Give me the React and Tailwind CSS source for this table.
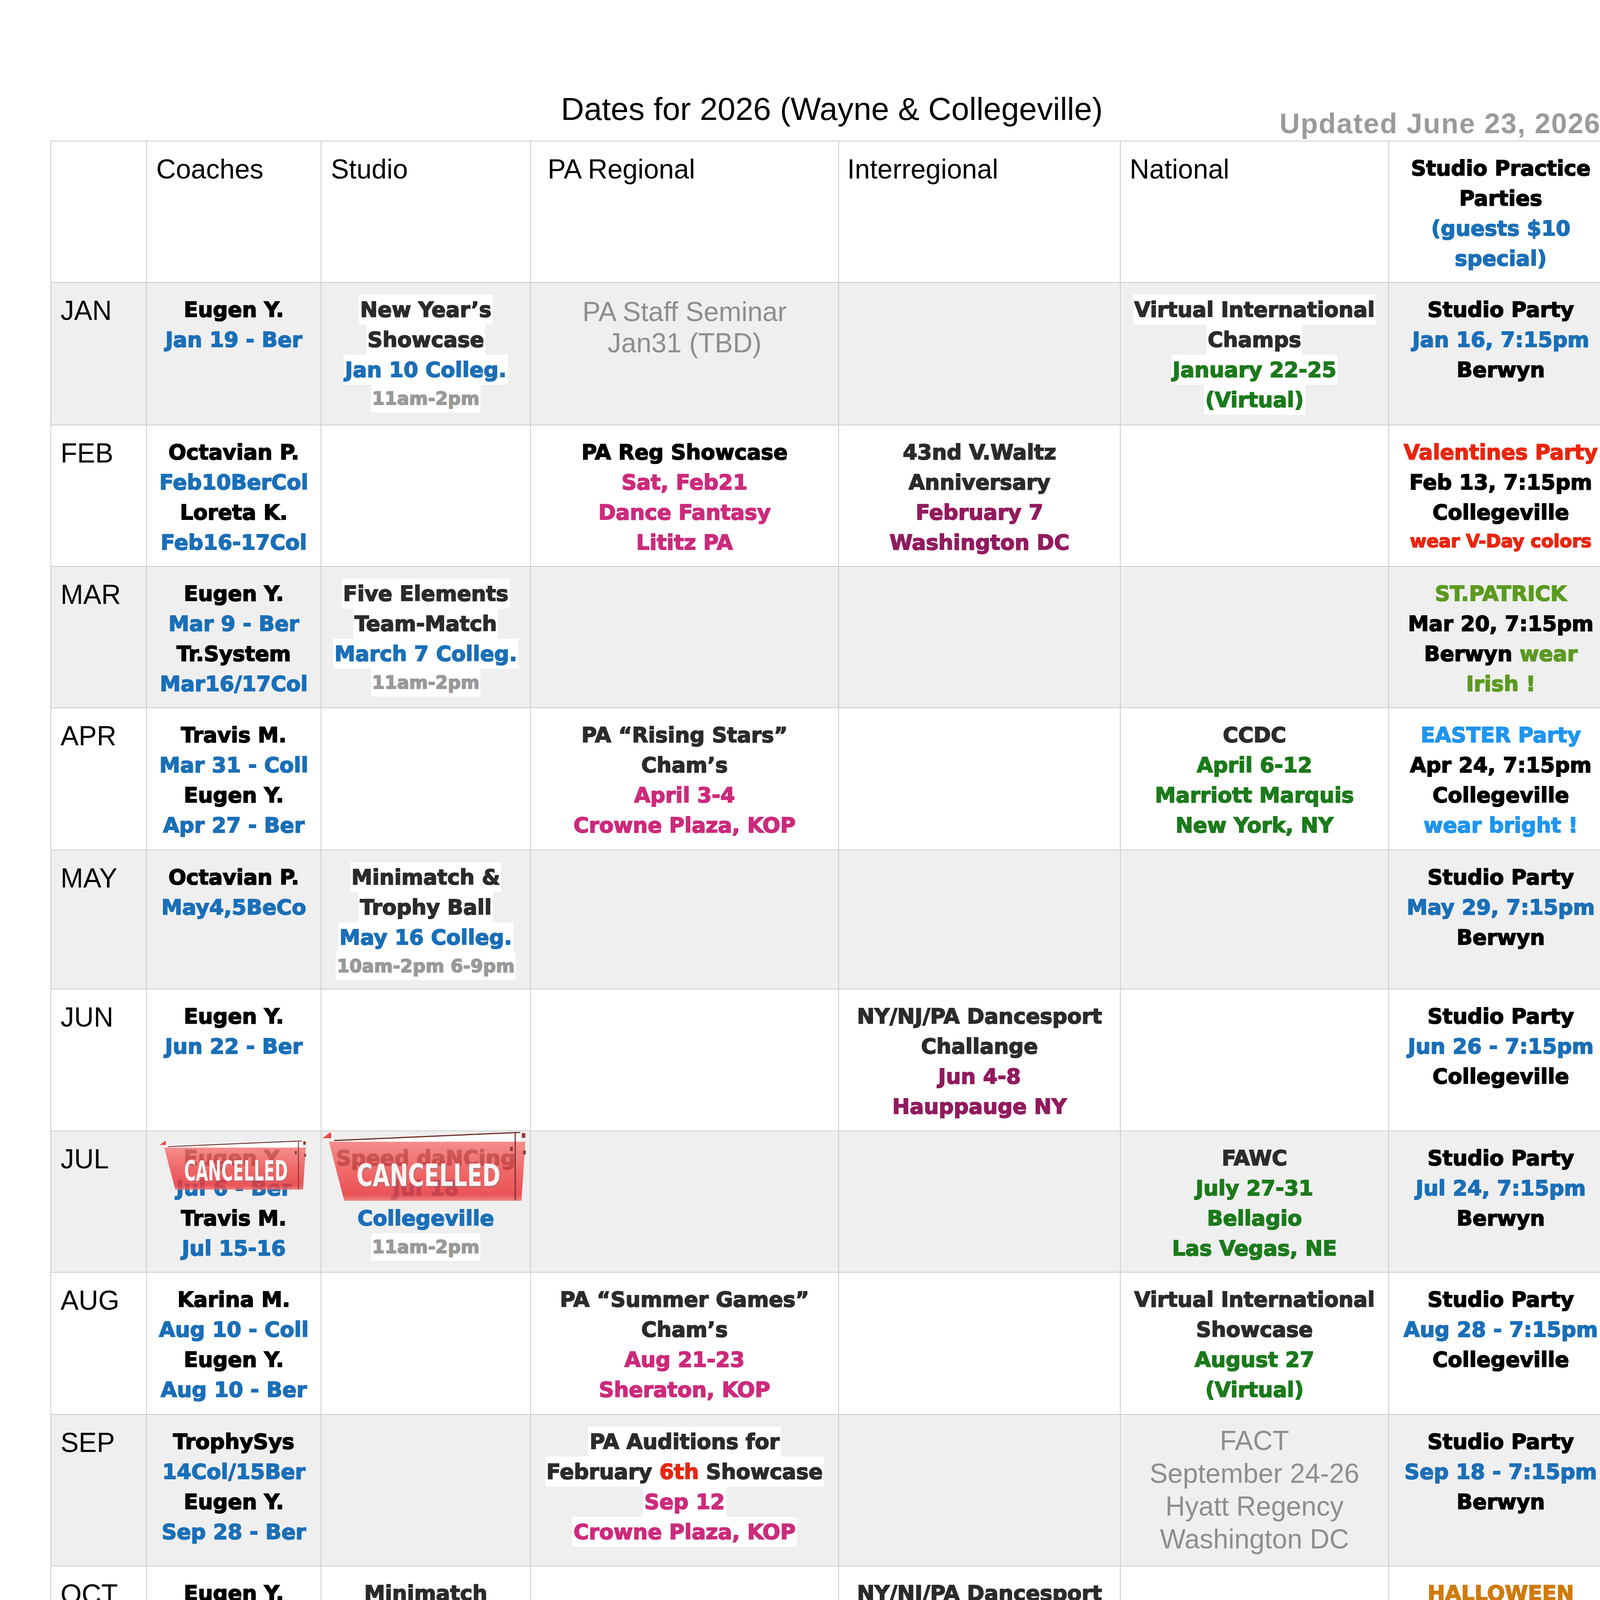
import React from 'react'

// text colours used in the sheet
const K = 'text-black'
const D = 'text-[#2b2b2b]'
const B = 'text-[#1a6fb8]'
const P = 'text-[#cc2a7c]'
const M = 'text-[#911b5e]'
const G = 'text-[#1b7a1b]'
const R = 'text-[#e8260f]'
const LG = 'text-[#5b9a1f]'
const LB = 'text-[#1f95f0]'
const O = 'text-[#d07a0c]'
const S = 'text-[#999999]'

const H = { hl: true }
const SM = { small: true }
const HS = { hl: true, small: true }
const l = (t, c, o = {}) => ({ t, c, ...o })

const ROWS = [
  { m: 'JAN', gray: true, cells: [
    [l('Eugen Y.', K), l('Jan 19 - Ber', B)],
    [l('New Year’s', D, H), l('Showcase', D, H), l('Jan 10 Colleg.', B, H), l('11am-2pm', S, HS)],
    { reg: ['PA Staff Seminar', 'Jan31 (TBD)'], lh: 'leading-[80px]', pt: 'pt-[34px]' },
    [],
    [l('Virtual International', D, H), l('Champs', D, H), l('January 22-25', G, H), l('(Virtual)', G, H)],
    [l('Studio Party', K), l('Jan 16, 7:15pm', B), l('Berwyn', K)],
  ]},
  { m: 'FEB', cells: [
    [l('Octavian P.', K), l('Feb10BerCol', B), l('Loreta K.', K), l('Feb16-17Col', B)],
    [],
    [l('PA Reg Showcase', K), l('Sat, Feb21', P), l('Dance Fantasy', P), l('Lititz PA', P)],
    [l('43nd V.Waltz', D), l('Anniversary', D), l('February 7', M), l('Washington DC', M)],
    [],
    [l('Valentines Party', R), l('Feb 13, 7:15pm', K), l('Collegeville', K), l('wear V-Day colors', R, SM)],
  ]},
  { m: 'MAR', gray: true, cells: [
    [l('Eugen Y.', K), l('Mar 9 - Ber', B), l('Tr.System', K), l('Mar16/17Col', B)],
    [l('Five Elements', D, H), l('Team-Match', D, H), l('March 7 Colleg.', B, H), l('11am-2pm', S, HS)],
    [], [], [],
    [l('ST.PATRICK', LG), l('Mar 20, 7:15pm', K), l([['Berwyn ', K], ['wear', LG]]), l('Irish !', LG)],
  ]},
  { m: 'APR', cells: [
    [l('Travis M.', K), l('Mar 31 - Coll', B), l('Eugen Y.', K), l('Apr 27 - Ber', B)],
    [],
    [l('PA “Rising Stars”', D), l('Cham’s', D), l('April 3-4', P), l('Crowne Plaza, KOP', P)],
    [],
    [l('CCDC', D), l('April 6-12', G), l('Marriott Marquis', G), l('New York, NY', G)],
    [l('EASTER Party', LB), l('Apr 24, 7:15pm', K), l('Collegeville', K), l('wear bright !', LB)],
  ]},
  { m: 'MAY', gray: true, cells: [
    [l('Octavian P.', K), l('May4,5BeCo', B)],
    [l('Minimatch &', D, H), l('Trophy Ball', D, H), l('May 16 Colleg.', B, H), l('10am-2pm 6-9pm', S, HS)],
    [], [], [],
    [l('Studio Party', K), l('May 29, 7:15pm', B), l('Berwyn', K)],
  ]},
  { m: 'JUN', cells: [
    [l('Eugen Y.', K), l('Jun 22 - Ber', B)],
    [], [],
    [l('NY/NJ/PA Dancesport', D), l('Challange', D), l('Jun 4-8', M), l('Hauppauge NY', M)],
    [],
    [l('Studio Party', K), l('Jun 26 - 7:15pm', B), l('Collegeville', K)],
  ]},
  { m: 'JUL', gray: true, cells: [
    { lines: [l('Eugen Y.', K), l('Jul 6 - Ber', B), l('Travis M.', K), l('Jul 15-16', B)], stamp: 'coach' },
    { lines: [l('Speed daNCing', K), l('Jul 18', B), l('Collegeville', B), l('11am-2pm', S, HS)], stamp: 'studio' },
    [], [],
    [l('FAWC', D), l('July 27-31', G), l('Bellagio', G), l('Las Vegas, NE', G)],
    [l('Studio Party', K), l('Jul 24, 7:15pm', B), l('Berwyn', K)],
  ]},
  { m: 'AUG', cells: [
    [l('Karina M.', K), l('Aug 10 - Coll', B), l('Eugen Y.', K), l('Aug 10 - Ber', B)],
    [],
    [l('PA “Summer Games”', D), l('Cham’s', D), l('Aug 21-23', P), l('Sheraton, KOP', P)],
    [],
    [l('Virtual International', D), l('Showcase', D), l('August 27', G), l('(Virtual)', G)],
    [l('Studio Party', K), l('Aug 28 - 7:15pm', B), l('Collegeville', K)],
  ]},
  { m: 'SEP', gray: true, cells: [
    [l('TrophySys', K), l('14Col/15Ber', B), l('Eugen Y.', K), l('Sep 28 - Ber', B)],
    [],
    [l('PA Auditions for', D, H), l([['February ', D], ['6th', R], [' Showcase', D]], null, H), l('Sep 12', P, H), l('Crowne Plaza, KOP', P, H)],
    [],
    { reg: ['FACT', 'September 24-26', 'Hyatt Regency', 'Washington DC'], lh: 'leading-[84px]', pt: 'pt-[24px]' },
    [l('Studio Party', K), l('Sep 18 - 7:15pm', B), l('Berwyn', K)],
  ]},
  { m: 'OCT', cells: [
    [l('Eugen Y.', K), l('Oct 12 - Ber', B)],
    [l('Minimatch', D), l('Oct 3 Colleg.', B), l('10am-5pm', S, SM), l('Trophy Ball', D), l('Oct 17 Colleg.', B), l('6-9pm', S, SM)],
    [],
    [l('NY/NJ/PA Dancesport', D), l('Challange', D), l('Oct 8-11', M), l('Whippany, NJ', M)],
    [],
    [l('HALLOWEEN', O), l('Oct 23 - 7:15pm', B), l('Collegeville', K), l('wear costumes !', O)],
  ]},
  { m: 'NOV', gray: true, cells: [
    [], [], [], [],
    [l('NDC', D, H), l('Nov 2 - 6', G, H), l('Hilton Bonnet Creek', G, H), l('Orlando, FL', G, H)],
    [l('Studio Party', K), l('Nov 20 - 7:15pm', B), l('Berwyn', K)],
  ]},
  { m: 'DEC', cells: [
    [], [],
    [l('PA Winter Classic', D), l('Championships', D), l('Dec 4-5', P), l('Crowne Plaza, KOP', P)],
    [], [],
    [l('Christmas', R), l('Studio Party', K), l('Dec 18 - 7:15pm', B), l('Collegeville', R)],
  ]},
]

const HEAD = [
  { t: '', pl: 'pl-[24px]' },
  { t: 'Coaches', pl: 'pl-[24px]' },
  { t: 'Studio', pl: 'pl-[24px]' },
  { t: 'PA Regional', pl: 'pl-[43px]' },
  { t: 'Interregional', pl: 'pl-[21px]' },
  { t: 'National', pl: 'pl-[23px]' },
]

const CELL = 'relative border-r-2 border-b-2 border-[#cbcbcb]'
const REG = "font-['Liberation_Sans',Arial,sans-serif] text-[69.5px]"
const BOLD = "font-['DejaVu_Sans',sans-serif] font-bold [-webkit-text-stroke:2.2px]"

function Line({ t, c, small, hl }) {
  const parts = Array.isArray(t) ? t : [[t, c]]
  return (
    <div className={small ? 'text-[46px] leading-[71px]' : 'text-[53.5px] leading-[77px]'}>
      <span className={`inline-block whitespace-pre ${hl ? 'bg-white px-[3px]' : ''}`}>
        {parts.map(([txt, col], i) => <span key={i} className={col}>{txt}</span>)}
      </span>
    </div>
  )
}

// red "CANCELLED" sticker laid over the July entries
function Cancelled({ id, className, fs, y }) {
  const font = "'DejaVu Sans Condensed','Liberation Sans Narrow','DejaVu Sans',sans-serif"
  return (
    <svg className={`absolute ${className}`} viewBox="0 0 520 180" preserveAspectRatio="none">
      <defs>
        <linearGradient id={id} x1="0" y1="0" x2="0" y2="1">
          <stop offset="0" stopColor="#f67a7a" />
          <stop offset="0.55" stopColor="#f04a4a" />
          <stop offset="0.9" stopColor="#e8363a" />
          <stop offset="1" stopColor="#f27070" />
        </linearGradient>
      </defs>
      <polygon points="29,23 504,2 504,26 29,26" fill="#ffffff" fillOpacity="0.95" />
      <line x1="29" y1="22" x2="504" y2="1" stroke="#6e2a2a" strokeWidth="3" />
      <polygon points="16,25 517,25 507,178 55,178" fill={`url(#${id})`} fillOpacity="0.84" />
      <line x1="491" y1="3" x2="491" y2="177" stroke="#7e3030" strokeWidth="3" />
      <rect x="508" y="3" width="9" height="12" fill="#8c3a3a" />
      <rect x="478" y="38" width="7" height="11" fill="#8c3a3a" />
      <rect x="511" y="48" width="7" height="10" fill="#8c3a3a" />
      <polygon points="0,16 20,0 26,16" fill="#e84a4a" />
      <rect x="22" y="2" width="6" height="20" fill="#ffffff" />
      <text x="272" y={y + 3} textAnchor="middle" textLength="367" lengthAdjust="spacingAndGlyphs"
        fontFamily={font} fontWeight="bold" fontSize={fs} fill="#7a7a7a" fillOpacity="0.5">CANCELLED</text>
      <text x="270" y={y} textAnchor="middle" textLength="367" lengthAdjust="spacingAndGlyphs"
        fontFamily={font} fontWeight="bold" fontSize={fs} fill="#ffffff" fillOpacity="0.93">CANCELLED</text>
    </svg>
  )
}

function Cell({ data, bg }) {
  if (data.reg) {
    return (
      <div className={`${CELL} ${bg} ${data.pt} text-center text-[#8e8e8e] ${REG} ${data.lh}`}>
        {data.reg.map((t, i) => <div key={i} className="whitespace-nowrap">{t}</div>)}
      </div>
    )
  }
  const lines = Array.isArray(data) ? data : data.lines
  return (
    <div className={`${CELL} ${bg} pt-[30px] text-center ${BOLD}`}>
      {lines.map((ln, i) => <Line key={i} {...ln} />)}
      {data.stamp === 'coach' && <Cancelled id="cg1" fs={101} y={145} className="left-[33px] top-[24px] w-[376px] h-[127px]" />}
      {data.stamp === 'studio' && <Cancelled id="cg2" fs={80} y={140} className="left-[3px] top-[2px] w-[522px] h-[178px]" />}
    </div>
  )
}

export default function App() {
  return (
    <div className="w-[4250px] h-[5500px] bg-white pl-[129px]">
      <div className="w-[4001px]">
        <div className="grid grid-cols-[1fr_auto_1fr] pt-[231px] h-[360px] font-['Liberation_Sans',Arial,sans-serif]">
          <div />
          <div className="text-[82px] leading-[95px] text-black whitespace-nowrap">Dates for 2026 (Wayne &amp; Collegeville)</div>
          <div className="mt-[44px] pr-[32px] text-right text-[72px] leading-[83px] font-bold tracking-[2.2px] text-[#9a9a9a] whitespace-nowrap">
            Updated June 23, 2026
          </div>
        </div>

        <div className="grid grid-cols-[245px_447px_536px_789px_721px_687px_574px] grid-rows-[362px_365px_362px_362px_364px_356px_363px_362px_364px_388px_502px_363px_362px] border-t-2 border-l-2 border-[#cbcbcb]">
          {HEAD.map((h, i) => (
            <div key={i} className={`${CELL} bg-white pt-[29px] ${h.pl} ${REG} leading-[84px] text-black`}>{h.t}</div>
          ))}
          <div className={`${CELL} bg-white pt-[30px] text-center ${BOLD}`}>
            <Line t="Studio Practice" c={K} />
            <Line t="Parties" c={K} />
            <Line t="(guests $10" c={B} />
            <Line t="special)" c={B} />
          </div>

          {ROWS.map(row => {
            const bg = row.gray ? 'bg-[#efefef]' : 'bg-white'
            return (
              <React.Fragment key={row.m}>
                <div className={`${CELL} ${bg} pt-[29px] pl-[24px] ${REG} leading-[84px] text-black`}>{row.m}</div>
                {row.cells.map((c, i) => <Cell key={i} data={c} bg={bg} />)}
              </React.Fragment>
            )
          })}
        </div>
      </div>
    </div>
  )
}
